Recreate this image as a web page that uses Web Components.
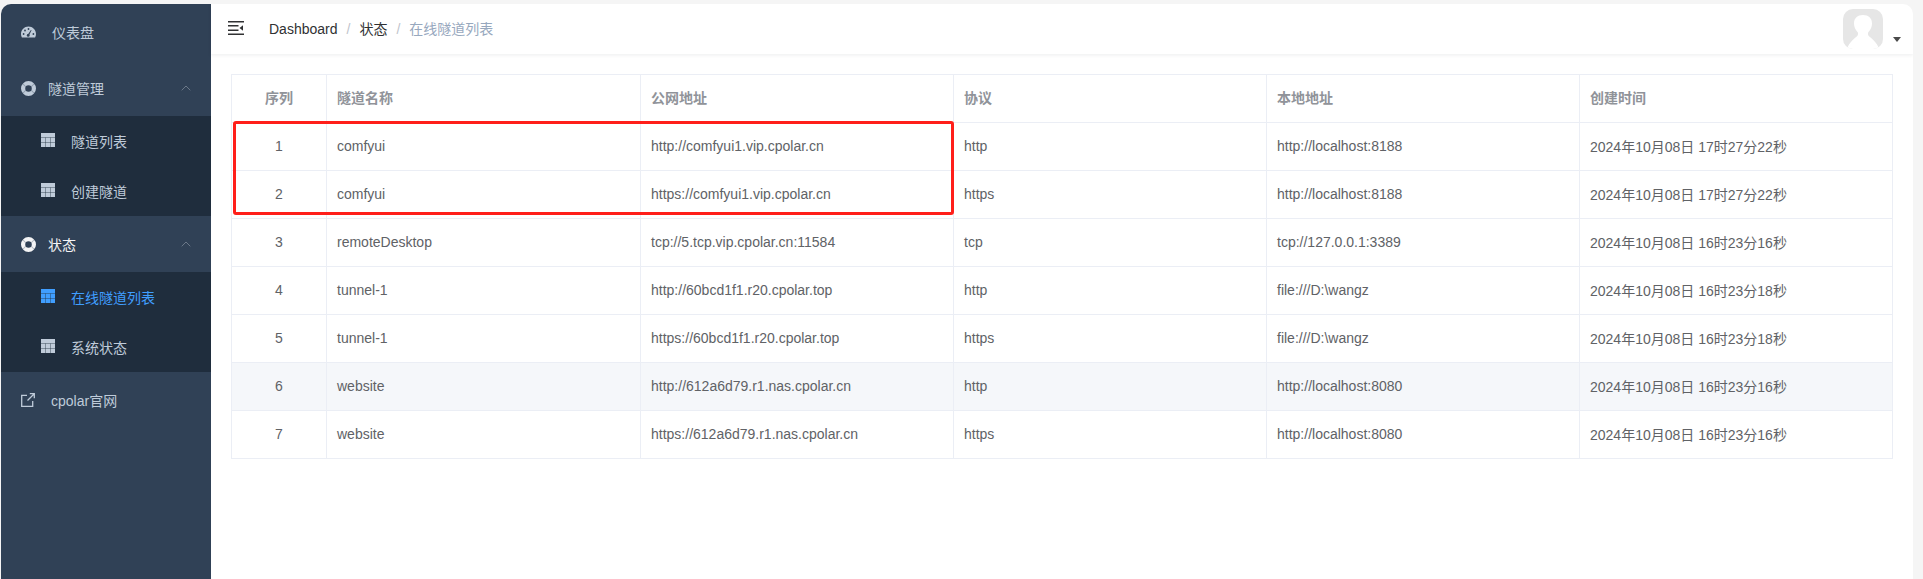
<!DOCTYPE html>
<html>
<head>
<meta charset="utf-8">
<style>
  html, body { margin: 0; height: 100%; background: #f5f5f5; overflow: hidden; }
  body { font: 14px "Liberation Sans", "Noto Sans CJK SC", sans-serif; }
</style>
</head>
<body>
<app-shell>
  <side-bar slot="side">
    <menu-item icon="gauge">仪表盘</menu-item>
    <menu-item icon="ring" arrow gap="12">隧道管理</menu-item>
    <sub-menu>
      <menu-item icon="table" sub>隧道列表</menu-item>
      <menu-item icon="table" sub>创建隧道</menu-item>
    </sub-menu>
    <menu-item icon="ring" arrow gap="12" open>状态</menu-item>
    <sub-menu>
      <menu-item icon="table" sub active>在线隧道列表</menu-item>
      <menu-item icon="table" sub>系统状态</menu-item>
    </sub-menu>
    <menu-item icon="link">cpolar官网</menu-item>
  </side-bar>
  <nav-bar slot="head"></nav-bar>
  <tunnel-table></tunnel-table>
</app-shell>

<script>
  const ICONS = {
    gauge: `<svg width="15" height="14" viewBox="0 0 15 14"><path fill="currentColor" d="M7.500 1.500C3.400 1.500 0 4.800 0 9c0 1.300.3 2.500.9 3.600h13.200c.6-1.100.9-2.300.9-3.600 0-4.200-3.400-7.500-7.500-7.500z"/><g fill="#304156"><circle cx="2.600" cy="9" r=".9"/><circle cx="4" cy="5.500" r=".9"/><circle cx="7.500" cy="4" r=".9"/><circle cx="12.400" cy="9" r=".9"/><circle cx="7.200" cy="10.400" r="1.400"/><path d="M6.500 10.100l3.400-5.200.7.400-2.800 5.500z"/></g></svg>`,
    ring: `<svg width="15" height="15" viewBox="0 0 16 16"><path fill="currentColor" fill-rule="evenodd" d="M8 0a8 8 0 1 1 0 16A8 8 0 0 1 8 0zm0 4.500a3.500 3.500 0 1 0 0 7 3.500 3.500 0 0 0 0-7z"/><path fill="#304156" opacity=".35" d="M2.300 2.600l3 3-.7.700-3-3zM13.700 2.600l-3 3 .7.700 3-3zM2.300 13.400l3-3-.7-.700-3 3zM13.700 13.400l-3-3 .7-.700 3 3z"/></svg>`,
    table: `<svg width="14" height="14" viewBox="0 0 14 14"><rect width="14" height="14" fill="currentColor"/><path fill="none" stroke="#1f2d3d" stroke-opacity=".4" d="M0 4.500h14M0 9.500h14M4.500 4.500V14M9.500 4.500V14"/></svg>`,
    link: `<svg width="14" height="14" viewBox="0 0 14 14"><path fill="none" stroke="currentColor" stroke-width="1.300" d="M6 2.300H.7v11h11V8M6.500 7.500L13 1M8.800.7h4.500v4.500"/></svg>`
  }

  customElements.define('app-shell', class extends HTMLElement {
    connectedCallback() {
      this.attachShadow({ mode: 'open' })
      this.shadowRoot.innerHTML = `
        <style>
          :host { display: flex; height: 575px; margin: 4px 10px 0 1px; background: #fff; border-radius: 10px 10px 0 0; overflow: hidden; }
          .main { flex: 1; min-width: 0; display: flex; flex-direction: column; }
        </style>
        <slot name="side"></slot>
        <div class="main"><slot name="head"></slot><slot></slot></div>`
    }
  })

  customElements.define('side-bar', class extends HTMLElement {
    connectedCallback() {
      this.attachShadow({ mode: 'open' })
      this.shadowRoot.innerHTML = `
        <style>
          :host { display: block; width: 210px; flex: none; background: #304156; }
        </style>
        <slot></slot>`
    }
  })

  customElements.define('sub-menu', class extends HTMLElement {
    connectedCallback() {
      this.attachShadow({ mode: 'open' })
      this.shadowRoot.innerHTML = `
        <style>:host { display: block; background: #1f2d3d; }</style>
        <slot></slot>`
    }
  })

  customElements.define('menu-item', class extends HTMLElement {
    connectedCallback() {
      const sub = this.hasAttribute('sub')
      const active = this.hasAttribute('active')
      const open = this.hasAttribute('open')
      const gap = this.getAttribute('gap') || 16
      const arrow = this.hasAttribute('arrow')
        ? `<svg class="arrow" width="10" height="6" viewBox="0 0 10 6"><path fill="none" stroke="#6b7888" stroke-width="1" d="M.7 5.300L5 1l4.300 4.300"/></svg>` : ''
      this.attachShadow({ mode: 'open' })
      this.shadowRoot.innerHTML = `
        <style>
          :host { display: flex; align-items: center; height: ${sub ? 50 : 56}px; padding-left: ${sub ? 40 : 20}px;
            color: ${active ? '#409eff' : open ? '#f4f4f5' : '#bfcbd9'}; font-size: 14px; box-sizing: border-box; }
          .ico { display: flex; margin-right: ${gap}px; ${sub ? 'margin-top: -2px;' : ''} }
          .arrow { margin-left: auto; margin-right: 20px; }
        </style>
        <span class="ico">${ICONS[this.getAttribute('icon')]}</span>
        <slot></slot>${arrow}`
    }
  })

  customElements.define('nav-bar', class extends HTMLElement {
    connectedCallback() {
      this.attachShadow({ mode: 'open' })
      this.shadowRoot.innerHTML = `
        <style>
          :host { display: flex; align-items: center; height: 50px; flex: none; box-shadow: 0 1px 4px rgba(0,21,41,.08); position: relative; font-size: 14px; }
          .toggle { display: flex; margin: -3px 25px 0 17px; }
          .crumbs { display: flex; align-items: baseline; color: #303133; line-height: 20px; }
          .sep { color: #c0c4cc; margin: 0 9px; }
          .last { color: #97a8be; }
          .user { margin-left: auto; display: flex; align-items: flex-end; margin-right: 12px; height: 40px; }
          .avatar { display: block; }
          .caret { width: 0; height: 0; border: 4px solid transparent; border-top: 5px solid #4a4a4a; border-bottom: 0; margin: 0 0 7px 10px; }
        </style>
        <span class="toggle">
          <svg width="16" height="14" viewBox="0 0 16 14"><path fill="#303133" d="M0 0h16v1.500H0zM0 4h10.500v1.500H0zM0 8.500h10.500V10H0zM0 12.500h16V14H0zM11.500 7l3.500-2.700v5.400z"/></svg>
        </span>
        <div class="crumbs"><span>Dashboard</span><span class="sep">/</span><span>状态</span><span class="sep">/</span><span class="last">在线隧道列表</span></div>
        <div class="user">
          <svg class="avatar" width="40" height="40" viewBox="0 0 40 40"><defs><clipPath id="r"><rect width="40" height="40" rx="10"/></clipPath></defs><g clip-path="url(#r)"><rect width="40" height="40" fill="#e6e6e6"/><path fill="#fff" d="M20 6c5.500 0 9 3 9 8.500 0 3.500-1.500 6.500-3.500 8.500-.8.800-.8 3 .5 4.200C28 29 34 33 36 40H4c2-7 8-11 10-12.800 1.300-1.200 1.300-3.400.5-4.200C12.500 21 11 18 11 14.500 11 9 14.500 6 20 6z"/></g></svg>
          <span class="caret"></span>
        </div>`
    }
  })

  const ROWS = [
    ['1', 'comfyui', 'http://comfyui1.vip.cpolar.cn', 'http', 'http://localhost:8188', '2024年10月08日 17时27分22秒'],
    ['2', 'comfyui', 'https://comfyui1.vip.cpolar.cn', 'https', 'http://localhost:8188', '2024年10月08日 17时27分22秒'],
    ['3', 'remoteDesktop', 'tcp://5.tcp.vip.cpolar.cn:11584', 'tcp', 'tcp://127.0.0.1:3389', '2024年10月08日 16时23分16秒'],
    ['4', 'tunnel-1', 'http://60bcd1f1.r20.cpolar.top', 'http', 'file:///D:\\wangz', '2024年10月08日 16时23分18秒'],
    ['5', 'tunnel-1', 'https://60bcd1f1.r20.cpolar.top', 'https', 'file:///D:\\wangz', '2024年10月08日 16时23分18秒'],
    ['6', 'website', 'http://612a6d79.r1.nas.cpolar.cn', 'http', 'http://localhost:8080', '2024年10月08日 16时23分16秒'],
    ['7', 'website', 'https://612a6d79.r1.nas.cpolar.cn', 'https', 'http://localhost:8080', '2024年10月08日 16时23分16秒']
  ]

  customElements.define('tunnel-table', class extends HTMLElement {
    connectedCallback() {
      this.attachShadow({ mode: 'open' })
      const head = ['序列', '隧道名称', '公网地址', '协议', '本地地址', '创建时间']
      const body = ROWS.map((r, i) => `<tr class="${i == 5 ? 'hover' : ''}">${r.map(c => `<td>${c}</td>`).join('')}</tr>`).join('')
      this.shadowRoot.innerHTML = `
        <style>
          :host { display: block; padding: 20px 20px 0 20px; position: relative; }
          table { border-collapse: collapse; table-layout: fixed; width: 1661px; color: #606266; font-size: 14px; }
          th, td { border: 1px solid #ebeef5; height: 48px; padding: 0 0 2px 10px; box-sizing: border-box; text-align: left; }
          th { color: #909399; font-weight: bold; padding-bottom: 4px; }
          th:first-child, td:first-child { text-align: center; padding-left: 0; }
          tr.hover td { background: #f5f7fa; }
          .mark { position: absolute; left: 22px; top: 67px; width: 721px; height: 94px; box-sizing: border-box; border: 3px solid #ff1f1a; border-radius: 3px; }
        </style>
        <table>
          <colgroup><col style="width:95px"><col style="width:314px"><col style="width:313px"><col style="width:313px"><col style="width:313px"><col style="width:313px"></colgroup>
          <thead><tr>${head.map(h => `<th>${h}</th>`).join('')}</tr></thead>
          <tbody>${body}</tbody>
        </table>
        <div class="mark"></div>`
    }
  })
</script>
</body>
</html>
